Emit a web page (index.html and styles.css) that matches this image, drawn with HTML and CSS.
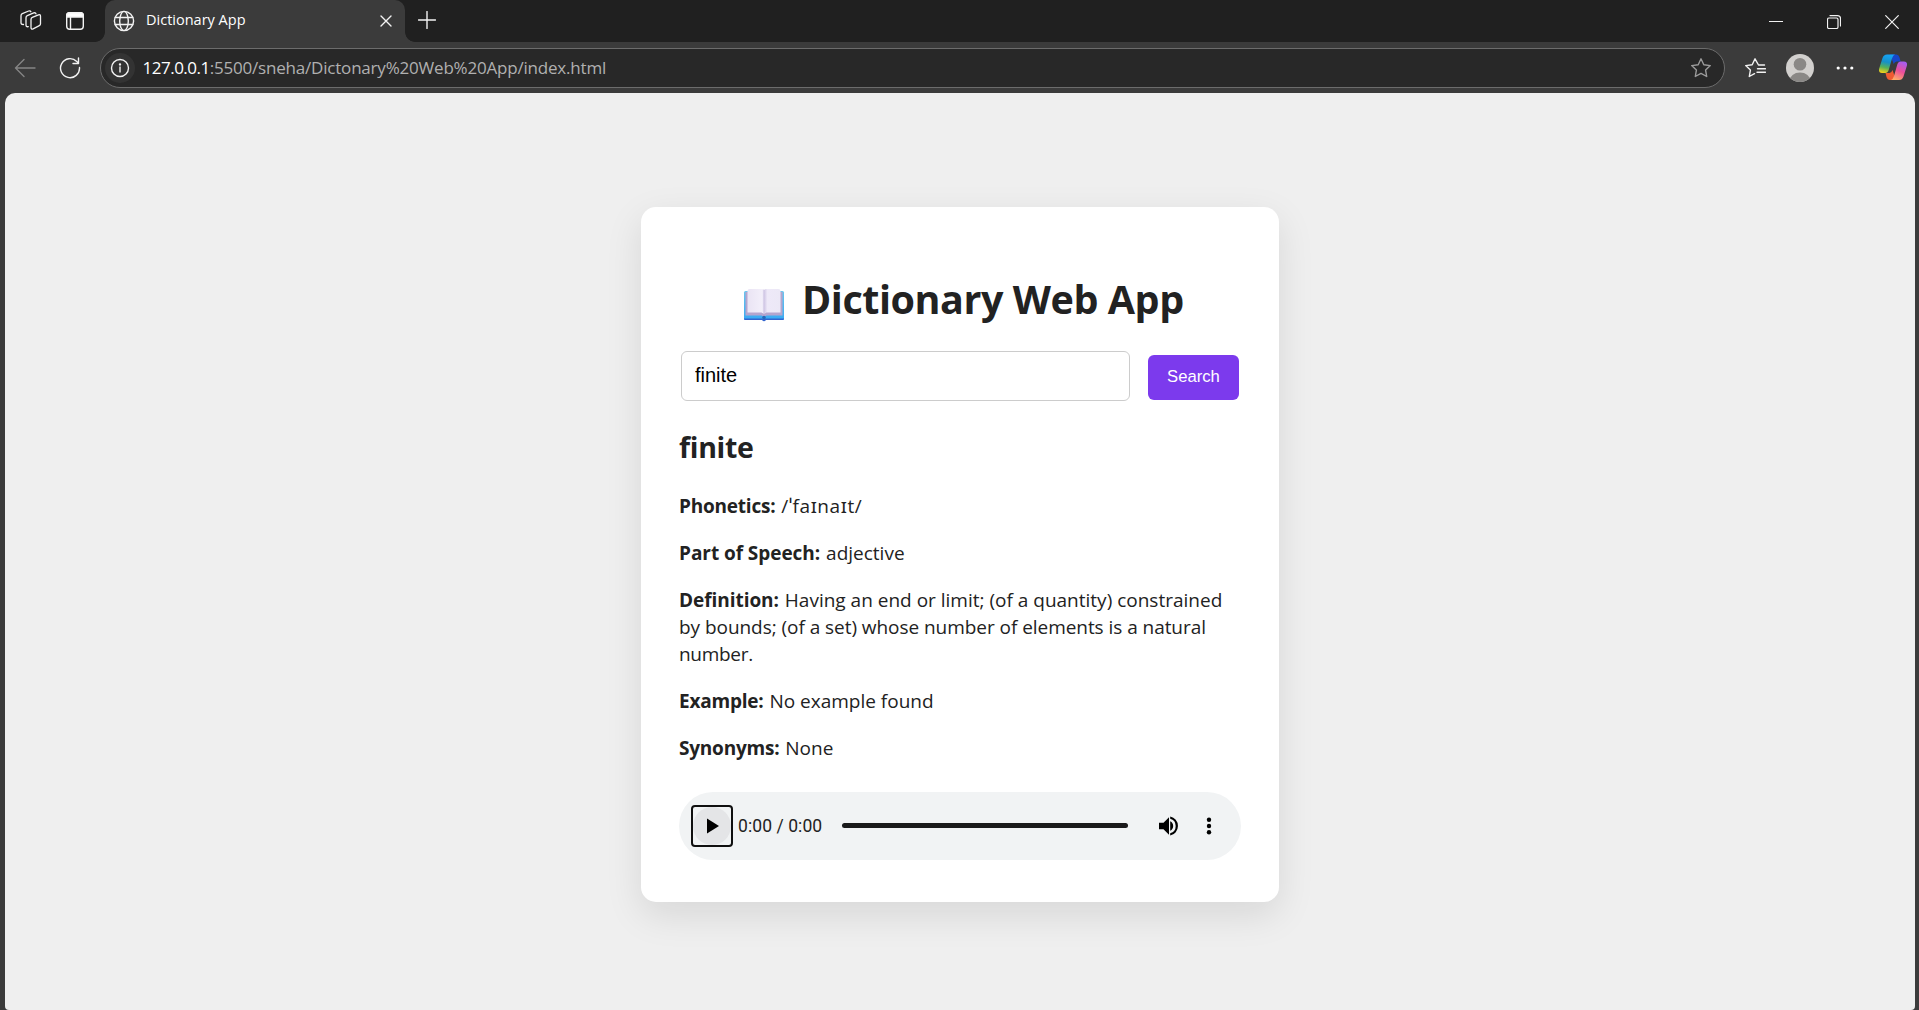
FILE: index.html
```
<!DOCTYPE html>
<html lang="en">
<head>
<meta charset="utf-8">
<title>Dictionary App</title>
<link rel="stylesheet" href="styles.css">
</head>
<body>
<div class="browser">
  <header class="titlebar">
    <svg class="ic workspaces" width="24" height="24" viewBox="0 0 24 24"><path d="M12 10.500q0-1.500 1.300-2.100l6.200-2.600q2-.6 2 1.400v7.500q0 1.300-1.200 1.900l-6.200 3.200q-2.100.9-2.100-1.300z"/><path d="M9.300 17.700q-2.300.4-2.300-1.700V8.700q0-1.500 1.300-2.100l6.400-2.700q1.800-.6 2.300 1"/><path d="M4.500 15.500q-2.500.2-2.500-1.800V6.800q0-1.500 1.300-2.100l6.400-2.700q1.600-.5 2.200.7"/></svg>
    <svg class="ic sidetabs" width="20" height="20" viewBox="0 0 20 20"><rect x="1.700" y="1.700" width="16.600" height="16.600" rx="3"/><path d="M5.500 6v12"/><path class="solid" d="M1.700 6V4.500Q1.700 1.700 4.500 1.700h11q2.800 0 2.800 2.800V6z"/></svg>
    <div class="tab">
      <svg class="ic" width="22" height="22" viewBox="0 0 22 22"><circle cx="11" cy="11" r="9.600"/><ellipse cx="11" cy="11" rx="4.300" ry="9.600"/><path d="M2.300 7.500h17.400M2.300 14.500h17.400"/></svg>
      <span class="tab-title">Dictionary App</span>
      <svg class="ic" width="12" height="12" viewBox="0 0 12 12"><path d="M1 1l10 10M11 1L1 11"/></svg>
    </div>
    <svg class="ic newtab" width="18" height="18" viewBox="0 0 18 18"><path d="M9 .5v17M.5 9h17"/></svg>
    <div class="window-buttons">
      <svg class="ic thin" width="14" height="14" viewBox="0 0 14 14"><path d="M.5 6.500h13"/></svg>
      <svg class="ic thin" width="14" height="14" viewBox="0 0 14 14"><rect x=".5" y="3" width="10.500" height="10.500" rx="1.500"/><path d="M3 .6h7.500q3 0 3 3V11"/></svg>
      <svg class="ic thin" width="14" height="14" viewBox="0 0 14 14"><path d="M.7.7l12.600 12.600M13.300.7L.7 13.300"/></svg>
    </div>
  </header>
  <nav class="toolbar">
    <svg class="ic back" width="22" height="20" viewBox="0 0 22 20"><path d="M21 10H1.500M10 1.500L1.500 10l8.500 8.500"/></svg>
    <svg class="ic reload" width="22" height="22" viewBox="0 0 22 22"><path d="M20.500 10.500A9.500 9.500 0 1 1 17.800 4.500L19.500 6M19.500 1v5.500H14"/></svg>
    <div class="address">
      <span class="site-info"><svg class="ic" width="20" height="20" viewBox="0 0 20 20"><circle cx="10" cy="10" r="8.500"/><path d="M10 9v5"/><circle class="solid" cx="10" cy="6.400" r=".5"/></svg></span>
      <span class="host">127.0.0.1</span><span class="path">:5500/sneha/Dictonary%20Web%20App/index.html</span>
      <svg class="ic star" width="22" height="22" viewBox="0 0 22 22"><path d="M11 1.800l2.800 5.900 6.500.9-4.700 4.500 1.100 6.400L11 16.400l-5.700 3.100 1.100-6.400L1.700 8.600l6.500-.9z"/></svg>
    </div>
    <svg class="ic favorites" width="22" height="22" viewBox="0 0 22 22"><path d="M20.500 8h-6L11 1.800 8.200 7.700l-6.500.9 4.700 4.500-1.100 6.400 5.200-2.800M13.500 11.800h8M13 15.300h8.500" /></svg>
    <svg class="avatar" width="28" height="28" viewBox="0 0 28 28"><defs><clipPath id="face"><circle cx="14" cy="14" r="14"/></clipPath></defs><g clip-path="url(#face)"><path fill="#d2d0ce" d="M0 0h28v28H0z"/><circle cx="14" cy="10.300" r="6.300" fill="#8a8886"/><ellipse cx="14" cy="27" rx="10.500" ry="8.500" fill="#8a8886"/></g></svg>
    <svg class="more" width="18" height="6" viewBox="0 0 18 6"><g fill="#fff"><circle cx="2.200" cy="3" r="1.600"/><circle cx="9" cy="3" r="1.600"/><circle cx="15.800" cy="3" r="1.600"/></g></svg>
    <svg class="copilot" width="28" height="27" viewBox="0 0 28 27">
      <defs>
        <linearGradient id="cool" x1=".5" y1="0" x2=".3" y2="1"><stop offset="0" stop-color="#16a3f5"/><stop offset=".4" stop-color="#1690c8"/><stop offset=".7" stop-color="#57b157"/><stop offset="1" stop-color="#f5d11a"/></linearGradient>
        <linearGradient id="warm" x1=".7" y1="0" x2=".3" y2="1"><stop offset="0" stop-color="#a45df0"/><stop offset=".5" stop-color="#ec4f99"/><stop offset="1" stop-color="#ffad68"/></linearGradient>
      </defs>
      <path fill="#1746c9" d="M11 .5h6q2.600 0 3.500 3l1.200 4h-4q-2 0-3 2.500z"/>
      <path fill="#ef5b32" d="M17 26h-6q-2.600 0-3.500-3l-1-4h4q2 0 3-3z"/>
      <path fill="url(#cool)" d="M8 .5h8q-2 .7-3 4L9.700 16q-.9 3-3.500 3H3q-4 0-2.800-4.500L3.500 4Q4.700.5 8 .5z"/>
      <path fill="url(#warm)" d="M20 26h-8q2-.7 3-4l3.300-11.500q.9-3 3.500-3H25q4 0 2.800 4.500L24.500 22.500Q23.300 26 20 26z"/>
    </svg>
  </nav>
  <main class="page">
    <section class="card">
      <h1 class="heading">
        <svg width="42" height="34" viewBox="0 0 42 34">
          <defs>
            <linearGradient id="cover" x1="0" y1="0" x2="0" y2="1"><stop offset="0" stop-color="#6cc5ee"/><stop offset="1" stop-color="#38a9f2"/></linearGradient>
            <linearGradient id="leaf" x1="0" y1="0" x2="1" y2="0"><stop offset="0" stop-color="#eae4f4"/><stop offset=".45" stop-color="#f3effa"/><stop offset=".5" stop-color="#cfc5e4"/><stop offset=".6" stop-color="#eee9f8"/><stop offset="1" stop-color="#ece8f6"/></linearGradient>
          </defs>
          <rect x="1" y="3" width="40" height="29" rx="1.500" fill="url(#cover)"/>
          <path fill="#3265cf" d="M1 30.500h40v.3q0 1.200-1.200 1.200H23q-2 2.500-4 0H2.200Q1 32 1 30.800z"/>
          <path fill="#b5a5ce" d="M2.500 4h37v23.500H23.500l-2.500 1.500-2.500-1.500h-16z"/>
          <path fill="url(#leaf)" d="M4.500 3q0-2 2-2H18q2.500 0 3 1 .5-1 3-1h11.500q2 0 2 2v21.500H23.500L21 26l-2.500-1.500h-14z"/>
          <circle cx="21" cy="29.500" r="1.800" fill="#246ab9"/>
        </svg>
        <span>Dictionary Web App</span>
      </h1>
      <div class="search">
        <input class="word-input" type="text" value="finite">
        <button class="search-button">Search</button>
      </div>
      <h2 class="word">finite</h2>
      <p class="entry"><b>Phonetics:</b> <span class="ipa">/ˈfaɪnaɪt/</span></p>
      <p class="entry"><b class="wide">Part of Speech:</b> adjective</p>
      <p class="entry"><b class="wide">Definition:</b> Having an end or limit; (of a quantity) constrained<br><span class="tight">by bounds; (of a set) whose number of elements is a natural</span><br><span class="number">number.</span></p>
      <p class="entry"><b>Example:</b> No example found</p>
      <p class="entry"><b>Synonyms:</b> None</p>
      <div class="player">
        <span class="play"><svg width="38" height="38" viewBox="0 0 38 38"><circle cx="19" cy="19" r="19" fill="#e4e5e7"/><path d="M14 11.500l12 7.500-12 7.500z"/></svg></span>
        <span class="time">0:00 / 0:00</span>
        <span class="track"></span>
        <svg class="volume" width="20" height="20" viewBox="0 0 20 20"><path d="M0 6.700v6.600h4.500L10 18.800V1.200L4.500 6.700zM11.200 5.300v9.400a5.200 5.200 0 0 0 0-9.400z"/><path d="M11.200.5v2.200a7.600 7.600 0 0 1 0 14.600v2.200a9.700 9.700 0 0 0 0-19z"/></svg>
        <svg width="6" height="18" viewBox="0 0 6 18"><circle cx="3" cy="2.700" r="2.200"/><circle cx="3" cy="9" r="2.200"/><circle cx="3" cy="15.300" r="2.200"/></svg>
      </div>
    </section>
  </main>
</div>
</body>
</html>
```
FILE: styles.css
```
* { box-sizing: border-box; }
body { margin: 0; font-family: "Open Sans", "Noto Sans", sans-serif; color: #222; }
svg { display: block; flex: none; }
.browser { display: flex; flex-direction: column; height: 1010px; overflow: hidden; background: #3b3b3b; }

.ic { fill: none; stroke: #f2f2f2; stroke-width: 1.4; stroke-linecap: round; stroke-linejoin: round; }
.ic .solid { fill: #fff; }
.thin { stroke-width: 1.2; }

.titlebar { display: flex; align-items: center; flex: none; height: 42px; padding: 0 20px 0 19px; background: #202020; }
.workspaces { stroke-width: 1.3; }
.sidetabs { margin: 0 0 1px 22px; }
.tab { position: relative; display: flex; align-items: center; align-self: flex-start; flex: none; width: 300px; height: 42px; margin-left: 20px; padding: 0 13px 1px 8px; border-radius: 10px 10px 0 0; background: #3b3b3b; }
.tab::before, .tab::after { content: ""; position: absolute; bottom: 0; width: 10px; height: 10px; }
.tab::before { left: -10px; background: radial-gradient(circle at 0 0, #202020 9.500px, #3b3b3b 10.200px); }
.tab::after { right: -10px; background: radial-gradient(circle at 100% 0, #202020 9.500px, #3b3b3b 10.200px); }
.tab-title { flex: 1; margin: -1px 0 0 11px; font-size: 14.5px; line-height: 20px; color: #fff; }
.newtab { margin: 0 0 2px 13px; }
.window-buttons { display: flex; gap: 44px; margin: 1px 0 0 auto; }

.toolbar { display: flex; align-items: center; flex: none; height: 51px; padding: 0 12px 0 14px; }
.back { stroke: #858585; }
.reload { margin-left: 23px; }
.address { display: flex; align-items: center; width: 1625px; height: 40px; margin-left: 19px; padding: 0 12px 0 4px; border: 1px solid #6c6c6c; border-radius: 20px; background: #282828; font-size: 17px; line-height: 24px; white-space: nowrap; }
.site-info { display: flex; align-items: center; justify-content: center; width: 30px; height: 30px; margin-right: 7.500px; border-radius: 50%; background: #333; }
.host { color: #fff; letter-spacing: -.5px; }
.path { color: #b0b0b0; letter-spacing: -.2px; }
.star { margin-left: auto; stroke: #9b9b9b; }
.favorites { margin-left: 19px; }
.avatar { margin-left: 20px; }
.more { margin-left: 22px; }
.copilot { margin-left: auto; }

.page { flex: 1; display: flex; justify-content: center; align-items: flex-start; margin: 0 4px 0 5px; padding-top: 114px; border-radius: 10px 10px 4px 4px; background: #efefef; }
.card { width: 638px; height: 695px; padding: 65px 38px 0 38px; border-radius: 15px; background: #fff; box-shadow: 0 12.5px 37.5px rgba(0, 0, 0, .1); }
.heading { display: flex; align-items: center; gap: 17px; margin: 0; padding-left: 64px; font-size: 39.5px; line-height: 54px; letter-spacing: -.45px; white-space: nowrap; }
.heading svg { margin-top: 11px; }
.search { display: flex; align-items: flex-start; gap: 18px; margin-top: 25px; padding-left: 2px; }
.word-input { width: 449px; height: 50px; padding: 0 13px 2px; border: 1px solid #ccc; border-radius: 6px; background: #fff; color: #000; font: 20px "Liberation Sans", sans-serif; }
.search-button { width: 91px; height: 45px; margin-top: 4px; padding: 0 0 2px; border: 0; border-radius: 6px; background: #7c3aed; color: #fff; font: 16.67px "Liberation Sans", sans-serif; }
.word { margin: 26px 0; font-size: 28.5px; line-height: 40px; letter-spacing: -.3px; }
.entry { margin: 0 0 20px; font-size: 19px; line-height: 27px; white-space: nowrap; }
.entry b { margin-right: 1px; letter-spacing: -.22px; }
.entry .wide { letter-spacing: -.05px; }
.ipa { letter-spacing: .6px; }
.tight { letter-spacing: -.05px; }
.number { letter-spacing: -.3px; }
.player { display: flex; align-items: center; width: 562px; height: 68px; margin-top: 30px; padding: 0 29px 0 12px; border-radius: 34px; background: #f1f3f4; }
.play { display: block; flex: none; width: 42px; height: 42px; border: 2px solid #101010; border-radius: 4px; }
.time { width: 83.500px; margin-left: 5px; font: 17.5px/24px Roboto, sans-serif; letter-spacing: .08px; white-space: nowrap; }
.track { flex: none; width: 286px; height: 5px; margin: 0 0 1px 20px; border-radius: 3px; background: #1a1a1a; }
.volume { margin: 0 27px 0 31px; }
```
